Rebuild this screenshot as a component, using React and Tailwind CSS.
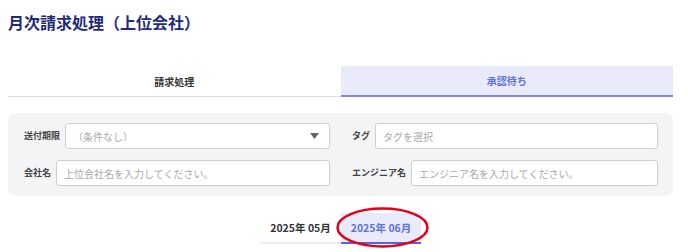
export default function App() {
  const fields = [
    { label: '送付期限', placeholder: '（条件なし）', select: true },
    { label: 'タグ', placeholder: 'タグを選択' },
    { label: '会社名', placeholder: '上位会社名を入力してください。' },
    { label: 'エンジニア名', placeholder: 'エンジニア名を入力してください。' },
  ]

  return (
    <div className="relative w-[688px] h-[252px] bg-white px-2 overflow-hidden" style={{ fontFamily: '"Noto Sans CJK JP", "Noto Sans", sans-serif' }}>
      <h1 className="pt-[10px] text-[16px] leading-[24px] font-bold text-[#1f2a7a]">月次請求処理（上位会社）</h1>

      {/* タブ */}
      <div className="mt-[32px] grid grid-cols-2 w-[665px]">
        <div className="h-[31px] flex items-center justify-center border-b border-[#e0e0e0] text-[10px] font-bold text-[#333]">請求処理</div>
        <div className="h-[31px] flex items-center justify-center bg-[#eaebfa] border-b-2 border-[#7d88ea] text-[10px] font-bold text-[#5e6fe0]">承認待ち</div>
      </div>

      {/* 検索条件 */}
      <div className="mt-[16px] w-[665px] rounded-lg bg-[#f4f4f6] pt-[10px] pb-[10px] pl-4 pr-[15px] grid grid-cols-2 gap-x-[22px] gap-y-[11px]">
        {fields.map(f => (
          <div key={f.label} className="flex items-center gap-[5px]">
            <span className="text-[9px] font-bold text-[#444] whitespace-nowrap">{f.label}</span>
            <div className="flex-1 h-[26px] bg-white border border-[#cfcfcf] rounded-[3px] flex items-center justify-between pl-[7px] pr-[10px]">
              <span className="text-[10px] text-[#a8a8a8]">{f.placeholder}</span>
              {f.select && (
                <svg width="9" height="6" viewBox="0 0 9 6"><path d="M0 0 L9 0 L4.5 6 Z" fill="#666" /></svg>
              )}
            </div>
          </div>
        ))}
      </div>

      {/* 月タブ */}
      <div className="mt-[17px] flex justify-center w-[665px]">
        <div className="w-[81px] h-[31px] flex items-center justify-center border-b-2 border-[#eeeeee] text-[10.5px] font-bold text-[#333]">2025年 05月</div>
        <div className="w-[80px] h-[31px] flex items-center justify-center bg-[#eaebfa] border-b-2 border-[#5466e0] text-[10.5px] font-bold text-[#5e6fe0]">2025年 06月</div>
      </div>

      {/* 注釈 */}
      <svg className="absolute left-[335px] top-[206px] pointer-events-none" width="95" height="43" viewBox="0 0 95 43">
        <ellipse cx="47.5" cy="21.5" rx="45" ry="19" fill="none" stroke="#e3001b" strokeWidth="2.5" />
      </svg>
    </div>
  )
}
